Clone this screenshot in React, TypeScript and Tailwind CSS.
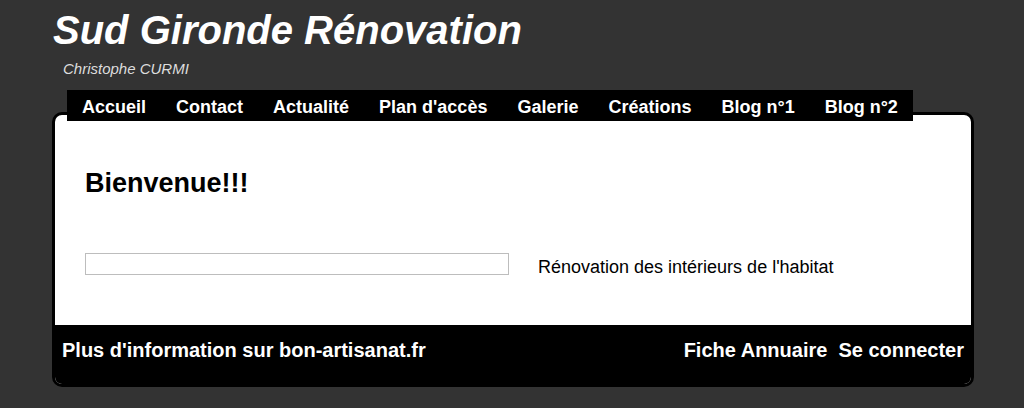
import React from 'react'

const navItems = ['Accueil', 'Contact', 'Actualité', "Plan d'accès", 'Galerie', 'Créations', 'Blog n°1', 'Blog n°2']

const App = () => {
    return (
        <div className="min-h-[408px] w-full bg-[#333333] pl-[52px] pr-[50px] font-['Liberation_Sans',Arial,sans-serif]">
            {/* header */}
            <h1 className="pt-[10px] pl-[1px] text-[40px] leading-[40px] font-bold italic text-white">
                Sud Gironde Rénovation
            </h1>
            <p className="mt-[11px] ml-[11px] text-[15px] leading-[15px] italic text-[#dddddd]">
                Christophe CURMI
            </p>

            {/* menu */}
            <nav className="relative z-10 mt-[14px] ml-[15px] inline-flex h-[31px] bg-black">
                {navItems.map((item) => (
                    <a key={item} className="px-[15px] pt-[3px] text-[18px] leading-[28px] font-bold text-white">
                        {item}
                    </a>
                ))}
            </nav>

            {/* main box */}
            <div className="-mt-[9px] overflow-hidden rounded-[10px] border-[3px] border-black bg-white">
                <div className="px-[30px] pt-[55px] pb-[47px]">
                    <h2 className="text-[27px] leading-[27px] font-bold text-black">Bienvenue!!!</h2>
                    <div className="mt-[56px] flex items-start">
                        <div className="h-[22px] w-[424px] border border-[#bdbdbd] bg-white"></div>
                        <p className="mt-[4px] ml-[29px] text-[18px] leading-[21px] text-black">
                            Rénovation des intérieurs de l'habitat
                        </p>
                    </div>
                </div>
                <footer className="flex h-[59px] items-start justify-between bg-black px-[7px] pt-[15px] text-[20px] leading-[20px] font-bold text-white">
                    <a>Plus d'information sur bon-artisanat.fr</a>
                    <div className="flex gap-[11px]">
                        <a>Fiche Annuaire</a>
                        <a>Se connecter</a>
                    </div>
                </footer>
            </div>
        </div>
    )
}

export default App
